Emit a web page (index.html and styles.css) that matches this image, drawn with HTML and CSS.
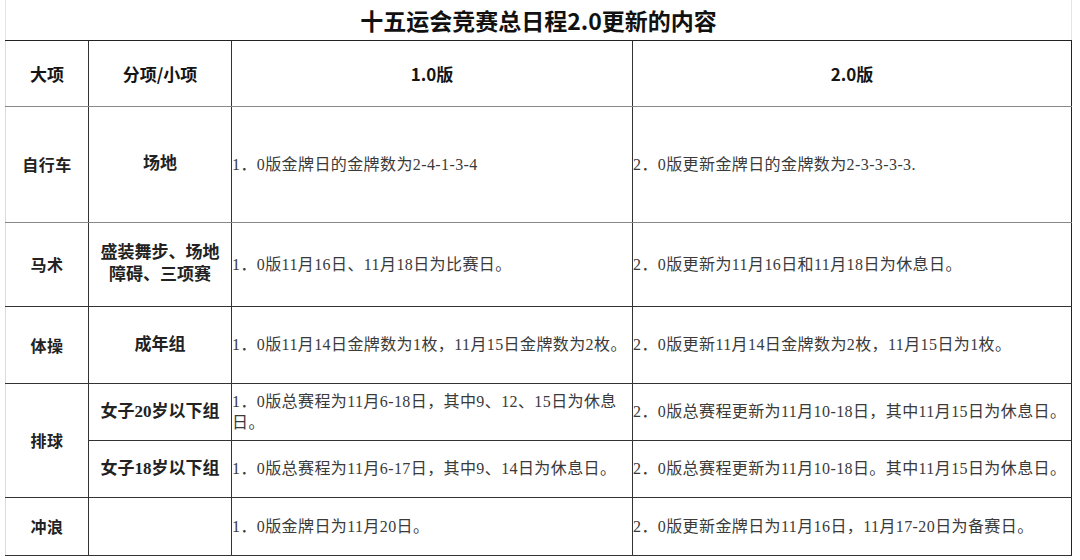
FILE: index.html
```html
<!DOCTYPE html>
<html lang="zh-CN">
<head>
<meta charset="utf-8">
<title>十五运会竞赛总日程2.0更新的内容</title>
<link rel="stylesheet" href="styles.css">
</head>
<body>
<div class="page">
<table class="sheet">
  <colgroup>
    <col class="c1"><col class="c2"><col class="c3"><col class="c4">
  </colgroup>
  <tr class="r-title"><td class="title" colspan="4">十五运会竞赛总日程2.0更新的内容</td></tr>
  <tr class="r-head">
    <th class="first">大项</th>
    <th>分项/小项</th>
    <th>1.0版</th>
    <th class="last">2.0版</th>
  </tr>
  <tr class="r1">
    <td class="cat first">自行车</td>
    <td class="sub">场地</td>
    <td class="txt">1．0版金牌日的金牌数为2-4-1-3-4</td>
    <td class="txt last">2．0版更新金牌日的金牌数为2-3-3-3-3.</td>
  </tr>
  <tr class="r2">
    <td class="cat first">马术</td>
    <td class="sub">盛装舞步、场地<br>障碍、三项赛</td>
    <td class="txt">1．0版11月16日、11月18日为比赛日。</td>
    <td class="txt last">2．0版更新为11月16日和11月18日为休息日。</td>
  </tr>
  <tr class="r3">
    <td class="cat first">体操</td>
    <td class="sub">成年组</td>
    <td class="txt">1．0版11月14日金牌数为1枚，11月15日金牌数为2枚。</td>
    <td class="txt last">2．0版更新11月14日金牌数为2枚，11月15日为1枚。</td>
  </tr>
  <tr class="r4">
    <td class="cat first" rowspan="2">排球</td>
    <td class="sub">女子20岁以下组</td>
    <td class="txt">1．0版总赛程为11月6-18日，其中9、12、15日为休息<br>日。</td>
    <td class="txt last">2．0版总赛程更新为11月10-18日，其中11月15日为休息日。</td>
  </tr>
  <tr class="r5">
    <td class="sub">女子18岁以下组</td>
    <td class="txt">1．0版总赛程为11月6-17日，其中9、14日为休息日。</td>
    <td class="txt last">2．0版总赛程更新为11月10-18日。其中11月15日为休息日。</td>
  </tr>
  <tr class="r6">
    <td class="cat first">冲浪</td>
    <td class="sub"></td>
    <td class="txt">1．0版金牌日为11月20日。</td>
    <td class="txt last">2．0版更新金牌日为11月16日，11月17-20日为备赛日。</td>
  </tr>
</table>
</div>
</body>
</html>
```

FILE: styles.css
```css
html, body {
  margin: 0;
  padding: 0;
  background: #ffffff;
}

.page {
  padding-left: 5px;
  width: 1066px;
}

.sheet {
  border-collapse: collapse;
  table-layout: fixed;
  width: 1066px;
  font-family: "Liberation Serif", "Noto Sans CJK SC", serif;
  color: #2a2a2a;
}

.c1 { width: 83px; }
.c2 { width: 143px; }
.c3 { width: 401px; }
.c4 { width: 439px; }

.sheet td, .sheet th {
  border: 1px solid #333;
  padding: 0;
  vertical-align: middle;
}

.sheet .first { border-left-color: #dcdcdc; }

.r-title { height: 40px; }
.title {
  border-top: none !important;
  border-left: 1px solid #e4e4e4 !important;
  border-right: 1px solid #e4e4e4 !important;
  border-bottom: 1px solid #222 !important;
  text-align: center;
  font-family: "Noto Sans CJK SC", sans-serif;
  font-weight: 700;
  font-size: 23px;
  color: #111;
  padding-right: 38px;
}

.r-head { height: 66px; }
.r-head th {
  font-family: "Noto Sans CJK SC", sans-serif;
  font-weight: 700;
  font-size: 17px;
  color: #151515;
  text-align: center;
  border-bottom-color: #888;
}

.r1 { height: 116px; }
.r1 td { border-bottom-color: #888; }
.r2 { height: 84px; }
.r3 { height: 77px; }
.r4 { height: 57px; }
.r5 { height: 57px; }
.r6 { height: 58px; }

.cat {
  text-align: center;
  font-family: "Noto Sans CJK SC", sans-serif;
  font-weight: 700;
  font-size: 16px;
  color: #222;
  letter-spacing: 0.5px;
}

.sub {
  text-align: center;
  font-family: "Liberation Serif", "Noto Sans CJK SC", serif;
  font-weight: 700;
  font-size: 17px;
  line-height: 22px;
  color: #222;
}

.txt {
  text-align: left;
  font-size: 16px;
  line-height: 21px;
  color: #3a3a3a;
  padding-left: 2px;
  letter-spacing: 0.4px;
  white-space: nowrap;
}

.sheet .last { border-right-color: #222; }
```
